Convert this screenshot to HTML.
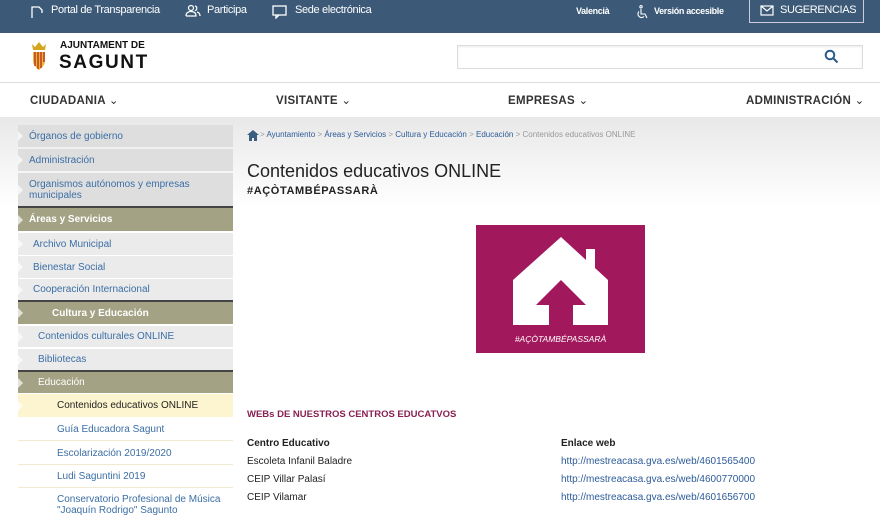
<!DOCTYPE html>
<html><head><meta charset="utf-8"><style>
*{margin:0;padding:0;box-sizing:border-box}
body{width:880px;height:511px;overflow:hidden;background:#fff;font-family:"Liberation Sans",Arial,sans-serif;position:relative}
.a{position:absolute;white-space:nowrap}
#top{position:absolute;left:0;top:0;width:880px;height:33px;background:#3c5a78}
#top .a{color:#fff;font-size:11px;top:4px;letter-spacing:-0.35px}
#hdr{position:absolute;top:33px;left:0;width:880px;height:50px;border-bottom:1px solid #ddd}
#nav{position:absolute;top:83px;left:0;width:880px;height:34px;background:#fff;box-shadow:0 2px 3px rgba(0,0,0,.12)}
#nav .a{font-size:11.5px;font-weight:bold;color:#333;top:10px;letter-spacing:.3px}
#grad{position:absolute;top:117px;left:0;width:880px;height:90px;background:linear-gradient(#e8e8e8,#fff)}
.it{position:absolute;left:18px;width:215px;font-size:10px;color:#3b6ea5;padding-left:11px;display:flex;align-items:center;line-height:11px}
.g1{background:#dedede}
.g2{background:#ebebeb}
.ol{background:#a3a284;color:#fff;border-top:2px solid #444}
.it::before{content:"";position:absolute;left:0;top:50%;margin-top:-5px;border-left:5px solid rgba(255,255,255,.7);border-top:5px solid transparent;border-bottom:5px solid transparent}
.wh{background:#fff;border-bottom:1px solid #f1ead0}
.cell{position:absolute;font-size:10px;color:#222}
.lk{color:#2d5b98}
</style></head><body>
<div id="top">
 <svg class="a" style="left:30px;top:5px" width="14" height="14" viewBox="0 0 14 14" fill="none" stroke="#fff" stroke-width="1.3"><path d="M2 13V2h7l3 3v3"/></svg>
 <div class="a" style="left:51px">Portal de Transparencia</div>
 <svg class="a" style="left:185px;top:4px" width="16" height="14" viewBox="0 0 16 14" fill="none" stroke="#fff" stroke-width="1.2"><circle cx="6" cy="4" r="2.5"/><path d="M1 12c0-3 2-4.5 5-4.5s5 1.5 5 4.5H1"/><path d="M10 2a2.3 2.3 0 010 4.5M12 8c2 .5 3 2 3 4"/></svg>
 <div class="a" style="left:207px">Participa</div>
 <svg class="a" style="left:272px;top:5px" width="16" height="14" viewBox="0 0 16 14" fill="none" stroke="#fff" stroke-width="1.3"><rect x="1" y="1" width="13" height="9"/><path d="M4 10v3l3-3"/></svg>
 <div class="a" style="left:295px">Sede electrónica</div>
 <div class="a" style="left:576px;font-size:9px !important;top:6px;font-weight:bold">Valencià</div>
 <svg class="a" style="left:636px;top:5px" width="13" height="14" viewBox="0 0 13 14" fill="none" stroke="#fff" stroke-width="1.1"><circle cx="5" cy="1.8" r="1.2"/><path d="M5 4v5h4l2 4"/><path d="M3 6.5a3.5 3.5 0 105 5"/></svg>
 <div class="a" style="left:654px;font-size:9px !important;top:6px;font-weight:bold">Versión accesible</div>
 <div class="a" style="left:749px;top:-1px;width:115px;height:24px;border:1px solid #ccd;"></div>
 <svg class="a" style="left:760px;top:5px" width="14" height="11" viewBox="0 0 14 11" fill="none" stroke="#fff" stroke-width="1.2"><rect x="1" y="1" width="12" height="9"/><path d="M1 1l6 5 6-5"/></svg>
 <div class="a" style="left:780px;top:4px">SUGERENCIAS</div>
</div>
<div id="hdr">
 <svg class="a" style="left:29px;top:7px" width="20" height="34" viewBox="0 0 20 34"><path d="M3 4l3 3 4-5 4 5 3-3-1 6H4z" fill="#d4a520"/><path d="M4 12h12v9c0 5-6 9-6 9s-6-4-6-9z" fill="#e8b830"/><path d="M6 12v14M9 12v17M12 12v16M15 12v10" stroke="#c0392b" stroke-width="1.5"/></svg>
 <div class="a" style="left:60px;top:7px;font-size:10px;font-weight:bold;color:#111">AJUNTAMENT DE</div>
 <div class="a" style="left:59px;top:19px;font-size:19px;font-weight:bold;color:#111;letter-spacing:1.6px">SAGUNT</div>
 <div class="a" style="left:457px;top:12px;width:406px;height:24px;border:1px solid #ddd;box-shadow:inset 0 1px 2px rgba(0,0,0,.08)"></div>
 <svg class="a" style="left:824px;top:16px" width="15" height="15" viewBox="0 0 15 15" fill="none" stroke="#2d5b8c" stroke-width="2"><circle cx="6" cy="6" r="4.3"/><path d="M9.5 9.5l4 4"/></svg>
</div>
<div id="nav">
 <div class="a" style="left:30px">CIUDADANIA <span style="font-weight:normal">&#8964;</span></div>
 <div class="a" style="left:276px">VISITANTE <span style="font-weight:normal">&#8964;</span></div>
 <div class="a" style="left:508px">EMPRESAS <span style="font-weight:normal">&#8964;</span></div>
 <div class="a" style="left:746px">ADMINISTRACIÓN <span style="font-weight:normal">&#8964;</span></div>
</div>
<div id="grad"></div>

<div class="it g1" style="top:125px;height:22px">Órganos de gobierno</div>
<div class="it g1" style="top:149px;height:22px">Administración</div>
<div class="it g1" style="top:173px;height:33px">Organismos autónomos y empresas<br>municipales</div>
<div class="it ol" style="top:206px;height:25px;font-weight:bold">Áreas y Servicios</div>
<div class="it g2" style="top:233px;height:22px;padding-left:15px">Archivo Municipal</div>
<div class="it g2" style="top:256px;height:22px;padding-left:15px">Bienestar Social</div>
<div class="it g2" style="top:279px;height:21px;padding-left:15px">Cooperación Internacional</div>
<div class="it ol" style="top:300px;height:24px;padding-left:34px;font-weight:bold">Cultura y Educación</div>
<div class="it g2" style="top:326px;height:21px;padding-left:20px">Contenidos culturales ONLINE</div>
<div class="it g2" style="top:349px;height:21px;padding-left:20px">Bibliotecas</div>
<div class="it ol" style="top:370px;height:23px;padding-left:20px">Educación</div>
<div class="it" style="top:394px;height:23px;padding-left:39px;background:#fdf5cf;color:#222">Contenidos educativos ONLINE</div>
<div class="it wh" style="top:418px;height:23px;padding-left:39px">Guía Educadora Sagunt</div>
<div class="it wh" style="top:442px;height:23px;padding-left:39px">Escolarización 2019/2020</div>
<div class="it wh" style="top:465px;height:23px;padding-left:39px">Ludi Saguntini 2019</div>
<div class="it" style="top:490px;height:30px;padding-left:39px;align-items:flex-start;padding-top:4px;background:#fff">Conservatorio Profesional de Música<br>"Joaquín Rodrigo" Sagunto</div>

<svg class="a" style="left:247px;top:130px" width="12" height="11" viewBox="0 0 12 11"><path d="M6 0L0 5h2v6h3V8h2v3h3V5h2z" fill="#3a5f80"/></svg>
<div class="a" style="left:260px;top:130px;font-size:8px;color:#999">&gt; <span class="lk">Ayuntamiento</span> &gt; <span class="lk">Áreas y Servicios</span> &gt; <span class="lk">Cultura y Educación</span> &gt; <span class="lk">Educación</span> &gt; Contenidos educativos ONLINE</div>
<div class="a" style="left:247px;top:161px;font-size:18px;color:#222">Contenidos educativos ONLINE</div>
<div class="a" style="left:247px;top:185px;font-size:11px;font-weight:bold;color:#222;letter-spacing:.6px">#AÇÒTAMBÉPASSARÀ</div>

<svg class="a" style="left:476px;top:225px" width="169" height="128" viewBox="0 0 169 128"><rect width="169" height="128" fill="#a2185c"/><path d="M85 12L37 55v45h95V55l-13-12V24h-9v11z" fill="#fff"/><path d="M85 55L60 80h13v20h24V80h13z" fill="#a2185c"/><text x="84.5" y="117" text-anchor="middle" font-size="8.5" font-style="italic" fill="#fff" font-family="Liberation Sans,sans-serif">#AÇÒTAMBÉPASSARÀ</text></svg>

<div class="a" style="left:247px;top:409px;font-size:9.5px;font-weight:bold;color:#8a1f52">WEBs DE NUESTROS CENTROS EDUCATVOS</div>
<div class="cell a" style="left:247px;top:438px;font-weight:bold">Centro Educativo</div>
<div class="cell a" style="left:561px;top:438px;font-weight:bold">Enlace web</div>
<div class="cell a" style="left:247px;top:456px">Escoleta Infanil Baladre</div>
<div class="cell a lk" style="left:561px;top:456px">http://mestreacasa.gva.es/web/4601565400</div>
<div class="cell a" style="left:247px;top:474px">CEIP Villar Palasí</div>
<div class="cell a lk" style="left:561px;top:474px">http://mestreacasa.gva.es/web/4600770000</div>
<div class="cell a" style="left:247px;top:492px">CEIP Vilamar</div>
<div class="cell a lk" style="left:561px;top:492px">http://mestreacasa.gva.es/web/4601656700</div>
</body></html>
